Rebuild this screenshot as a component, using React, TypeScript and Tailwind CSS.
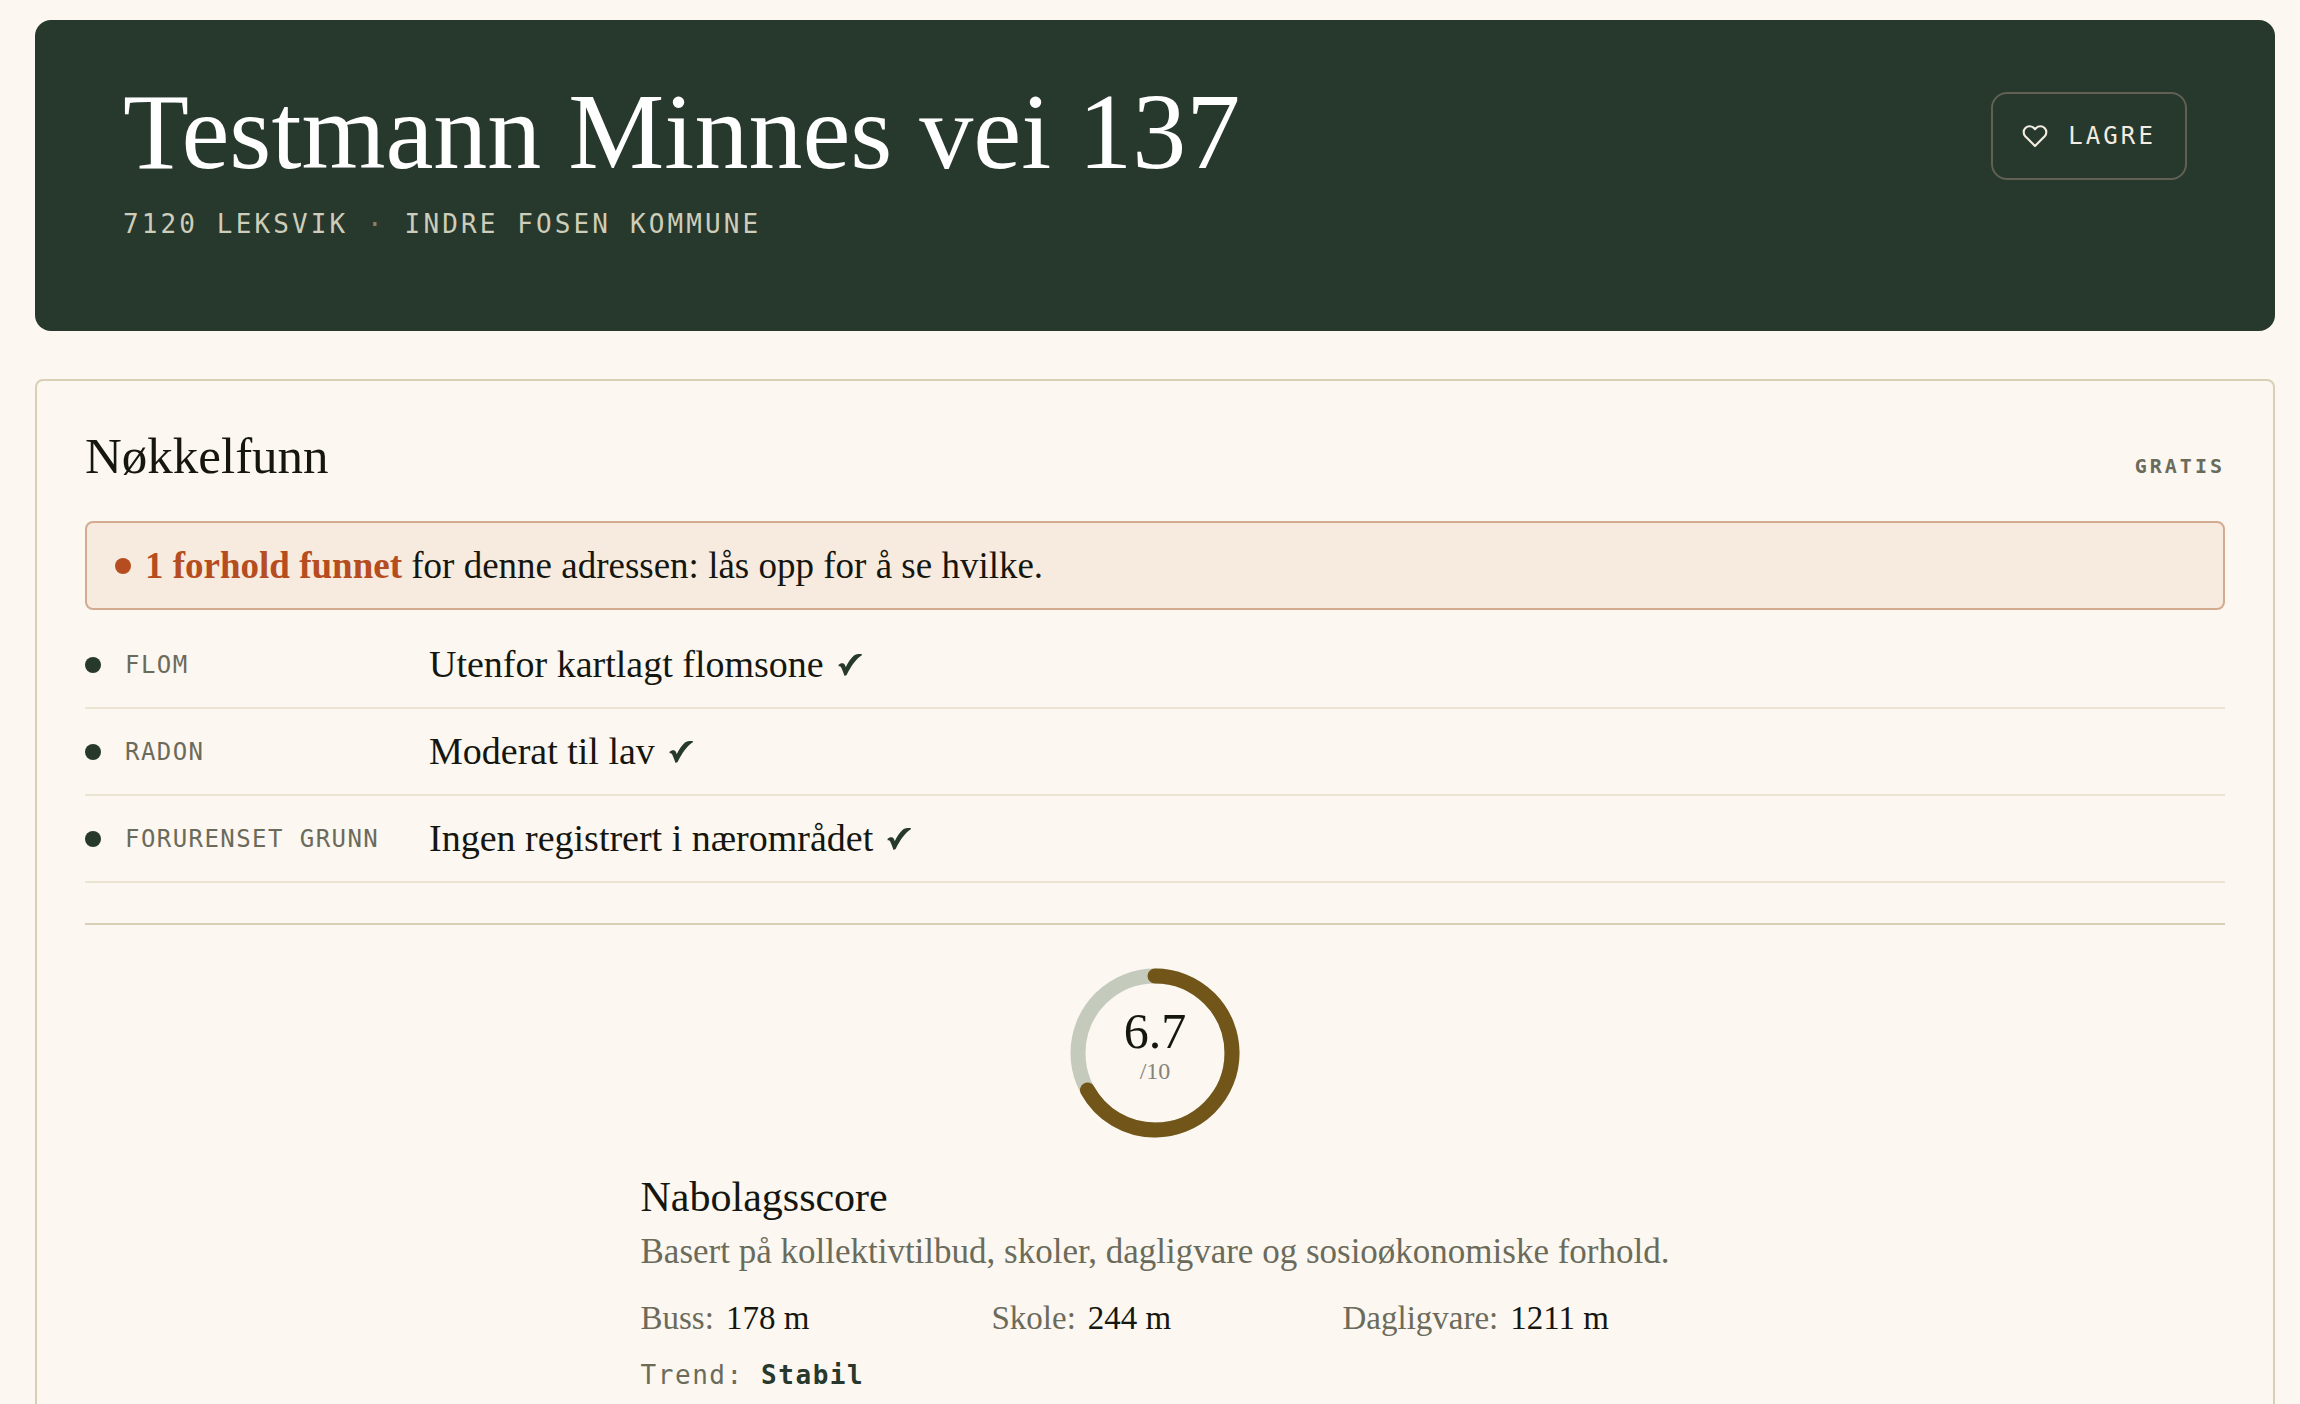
const findings = [
    { label: 'Flom', value: 'Utenfor kartlagt flomsone' },
    { label: 'Radon', value: 'Moderat til lav' },
    { label: 'Forurenset grunn', value: 'Ingen registrert i nærområdet' },
]

const distances = [
    { label: 'Buss', value: '178 m' },
    { label: 'Skole', value: '244 m' },
    { label: 'Dagligvare', value: '1211 m' },
]

const mono = "font-['DejaVu_Sans_Mono','Liberation_Mono',monospace]"

function HeartIcon() {
    return (
        <svg
            viewBox="0 0 24 24"
            className="size-[26px]"
            fill="none"
            stroke="currentColor"
            strokeWidth="2"
            strokeLinecap="round"
            strokeLinejoin="round"
            aria-hidden="true"
        >
            <path d="M20.84 4.61a5.5 5.5 0 0 0-7.78 0L12 5.67l-1.06-1.06a5.5 5.5 0 0 0-7.78 7.78l1.06 1.06L12 21.23l7.78-7.78 1.06-1.06a5.5 5.5 0 0 0 0-7.78z" />
        </svg>
    )
}

function CheckIcon() {
    return (
        <svg viewBox="0 0 24 24" className="size-6 text-[#27382d]" fill="currentColor" role="img" aria-label="OK">
            <path d="M.6 11.8C2.6 9.6 5.6 9.8 6.7 11.6C7.2 12.4 7.4 13.2 7.7 14.2C10 9.6 13 5 16 2.6C18.2 1 21 .8 23.8 1L23.8 2.2C18 6 13.4 12.4 8.6 22L6.6 23C5.4 20 4.4 17 3.2 14.6C2.7 13.5 1.9 13.1 .6 13.2Z" />
        </svg>
    )
}

function Hero() {
    return (
        <header className="flex items-start justify-between gap-8 rounded-2xl bg-[#27382d] px-22 pt-18 pb-[87px]">
            <div>
                <h1 className="text-[108px] leading-[80px] text-white">Testmann Minnes vei 137</h1>
                <p className={`${mono} mt-8 text-[26px] leading-10 tracking-[0.12em] text-[#cdcdb9] uppercase`}>
                    7120 Leksvik <span className="text-[#85836f]">·</span> Indre Fosen kommune
                </p>
            </div>
            <button
                type="button"
                className={`${mono} flex items-center gap-5 rounded-2xl border-2 border-[#625f53] px-[29px] py-6 text-2xl leading-9 tracking-[0.13em] text-[#f3ece0] uppercase`}
            >
                <HeartIcon />
                Lagre
            </button>
        </header>
    )
}

function ScoreRing({ score }: { score: number }) {
    return (
        <div className="relative mx-auto size-44">
            <svg viewBox="0 0 176 176" className="size-full -rotate-90" fill="none" aria-hidden="true">
                <circle cx="88" cy="88" r="77" stroke="#c4cabc" strokeWidth="15" />
                <circle
                    cx="88"
                    cy="88"
                    r="77"
                    stroke="#725518"
                    strokeWidth="15"
                    strokeLinecap="round"
                    pathLength={100}
                    strokeDasharray={`${score * 10} 100`}
                />
            </svg>
            {/* Score on top of the ring */}
            <div className="absolute inset-0 flex flex-col items-center justify-center gap-1 pb-4">
                <span className="text-[50px] leading-12">{score}</span>
                <span className="text-2xl leading-none text-[#85847a]">/10</span>
            </div>
        </div>
    )
}

export default function App() {
    return (
        <main className="min-h-screen bg-[#fcf7f0] pt-5 pr-[25px] pl-[35px] font-['Liberation_Serif',serif] text-[#14160f]">
            <Hero />

            <section className="mt-12 rounded-lg border-2 border-[#d8cfb6] p-12">
                <div className="flex items-baseline justify-between">
                    <h2 className="text-[51px] leading-[54px]">Nøkkelfunn</h2>
                    <span className={`${mono} text-xl font-bold tracking-[0.15em] text-[#6b6b5b] uppercase`}>
                        Gratis
                    </span>
                </div>

                {/* Alert */}
                <div className="mt-[38px] flex items-center gap-3.5 rounded-lg border-2 border-[#d3ab90] bg-[#f7ebdf] px-7 py-4">
                    <span className="size-4 shrink-0 rounded-full bg-[#b54d21]" />
                    <p className="text-[37px] leading-[53px]">
                        <strong className="font-bold text-[#b54d21]">1 forhold funnet</strong> for denne adressen: lås opp for å se hvilke.
                    </p>
                </div>

                {/* Findings */}
                <dl className="mt-3">
                    {findings.map((item) => (
                        <div key={item.label} className="flex items-center border-b-2 border-[#ece4d2] py-4">
                            <span className="size-4 shrink-0 rounded-full bg-[#27382d]" />
                            <dt className={`${mono} ml-6 w-[304px] text-2xl tracking-[0.06em] text-[#6b6b5b] uppercase`}>
                                {item.label}
                            </dt>
                            <dd className="flex items-center gap-3.5 text-[38px] leading-[53px]">
                                {item.value}
                                <CheckIcon />
                            </dd>
                        </div>
                    ))}
                </dl>

                {/* Neighbourhood score */}
                <div className="mt-10 border-t-2 border-[#d8cfb6] pt-10">
                    <ScoreRing score={6.7} />
                    <div className="mx-auto mt-7 w-fit">
                        <h3 className="text-[42px] leading-[56px]">Nabolagsscore</h3>
                        <p className="text-[35px] leading-[54px] text-[#6b6b5b]">
                            Basert på kollektivtilbud, skoler, dagligvare og sosioøkonomiske forhold.
                        </p>
                        <dl className="mt-3.5 grid grid-cols-3 gap-6 text-[33px] leading-[50px]">
                            {distances.map((item) => (
                                <div key={item.label} className="flex gap-3">
                                    <dt className="text-[#6b6b5b]">{item.label}:</dt>
                                    <dd>{item.value}</dd>
                                </div>
                            ))}
                        </dl>
                        <p className={`${mono} mt-3 text-[26px] leading-10 tracking-[0.06em] text-[#6b6b5b]`}>
                            Trend: <strong className="font-bold text-[#27382d]">Stabil</strong>
                        </p>
                    </div>
                </div>
            </section>
        </main>
    )
}
